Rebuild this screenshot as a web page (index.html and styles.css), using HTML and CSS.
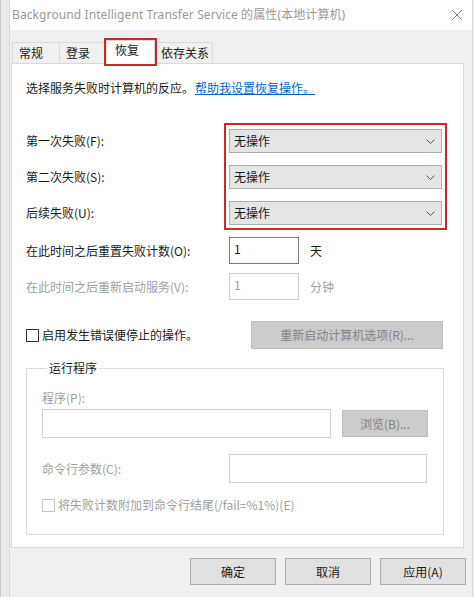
FILE: index.html
```html
<!DOCTYPE html>
<html>
<head>
    <title>Background Intelligent Transfer Service 的属性(本地计算机)</title>
    <link rel="stylesheet" href="styles.css">
</head>
<body>
    <div class="screen">
        <div class="behind"></div>
        <div class="window">
            <div class="titlebar">
                <span class="title">Background Intelligent Transfer Service 的属性(本地计算机)</span>
                <svg class="close" width="12" height="12" viewBox="0 0 12 12">
                    <path d="M1 1 L11 11 M11 1 L1 11" stroke="#7a7a7a" stroke-width="1" fill="none"/>
                </svg>
            </div>

            <div class="tabs">
                <div class="tab tab-w1">常规</div>
                <div class="tab tab-w1">登录</div>
                <div class="tab tab-active">恢复</div>
                <div class="tab tab-w2">依存关系</div>
            </div>

            <div class="page">
                <p class="intro">选择服务失败时计算机的反应。<a href="#">帮助我设置恢复操作。</a></p>

                <div class="fail-rows">
                    <div class="fail-labels">
                        <div class="fail-label">第一次失败(F):</div>
                        <div class="fail-label">第二次失败(S):</div>
                        <div class="fail-label">后续失败(U):</div>
                    </div>
                    <div class="fail-selects">
                        <div class="combo"><span>无操作</span><svg width="9" height="5" viewBox="0 0 9 5"><path d="M0.5 0.5 L4.5 4.5 L8.5 0.5" stroke="#555" fill="none"/></svg></div>
                        <div class="combo"><span>无操作</span><svg width="9" height="5" viewBox="0 0 9 5"><path d="M0.5 0.5 L4.5 4.5 L8.5 0.5" stroke="#555" fill="none"/></svg></div>
                        <div class="combo"><span>无操作</span><svg width="9" height="5" viewBox="0 0 9 5"><path d="M0.5 0.5 L4.5 4.5 L8.5 0.5" stroke="#555" fill="none"/></svg></div>
                    </div>
                </div>

                <div class="num-row first">
                    <span class="num-label">在此时间之后重置失败计数(O):</span>
                    <span class="num-box">1</span>
                    <span class="unit">天</span>
                </div>
                <div class="num-row disabled">
                    <span class="num-label">在此时间之后重新启动服务(V):</span>
                    <span class="num-box">1</span>
                    <span class="unit">分钟</span>
                </div>

                <div class="check-row">
                    <span class="check"></span>
                    <span class="check-text">启用发生错误便停止的操作。</span>
                    <span class="btn btn-disabled btn-restart">重新启动计算机选项(R)...</span>
                </div>

                <fieldset class="group">
                    <legend>运行程序</legend>
                    <div class="muted prog-label">程序(P):</div>
                    <div class="prog-row">
                        <span class="field field-prog"></span>
                        <span class="btn btn-disabled btn-browse">浏览(B)...</span>
                    </div>
                    <div class="args-row">
                        <span class="muted args-label">命令行参数(C):</span>
                        <span class="field field-args"></span>
                    </div>
                    <div class="append-row">
                        <span class="check check-disabled"></span>
                        <span class="muted">将失败计数附加到命令行结尾(/fail=%1%)(E)</span>
                    </div>
                </fieldset>
            </div>

            <div class="buttons">
                <span class="btn">确定</span>
                <span class="btn">取消</span>
                <span class="btn">应用(A)</span>
            </div>
        </div>
    </div>
</body>
</html>
```

FILE: styles.css
```css
* { box-sizing: border-box; }
body { margin: 0; font-family: "Noto Sans CJK SC", "Noto Sans", sans-serif; font-size: 12px; line-height: 16px; color: #1a1a1a; background: #f0f0f0; }
.screen { display: flex; width: 474px; height: 597px; overflow: hidden; }
.behind { width: 10px; background: #ebebeb; border-left: 1px solid #c9c9c9; border-right: 1px solid #d8d8d8; }
.window { width: 463px; background: #f0f0f0; border-right: 1px solid #dadada; }

.titlebar { height: 30px; background: #fff; display: flex; align-items: center; padding-left: 2px; }
.title { font-family: "Noto Sans", "Noto Sans CJK SC", sans-serif; font-size: 12px; color: #9a9a9a; letter-spacing: 0.1px; }
.close { margin-left: auto; margin-right: 9px; }

.tabs { display: flex; align-items: flex-end; margin-top: 12px; padding-left: 2px; height: 21px; position: relative; z-index: 1; }
.tab { height: 21px; padding: 2px 0 0 6px; background: #f0f0f0; border: 1px solid #d9d9d9; border-bottom: none; margin-right: -1px; }
.tab-w1 { width: 48px; }
.tab-w2 { width: 59px; padding-left: 6px; }
.tab-active { width: 49px; height: 24px; margin-bottom: -1px; background: #fff; padding: 1px 0 0 8px; position: relative; z-index: 2; outline: 2px solid #c9282d; outline-offset: 0; }

.page { margin-left: 1px; width: 453px; height: 485px; background: #fff; border: 1px solid #d9d9d9; padding: 16px 20px 0 14px; }
.intro { margin: 0; }
.intro a { color: #0066cc; margin-left: 1px; }

.fail-rows { display: flex; margin-top: 27px; }
.fail-labels { flex: none; width: 198px; padding-top: 6px; display: flex; flex-direction: column; gap: 12px; }
.fail-label { height: 24px; line-height: 24px; }
.fail-selects { flex: none; width: 223px; border: 2px solid #c9282d; padding: 4px 3px 3px 3px; display: flex; flex-direction: column; gap: 12px; }
.combo { height: 24px; background: #e5e5e5; border: 1px solid #adadad; display: flex; align-items: center; justify-content: space-between; padding: 0 6px 0 4px; }

.num-row { display: flex; align-items: center; margin-top: 9px; }
.num-row.first { margin-top: 7px; }
.num-label { width: 203px; }
.num-box { width: 70px; height: 27px; border: 1px solid #7a7a7a; padding: 3px 0 0 4px; }
.unit { margin-left: 11px; }
.disabled { color: #a0a0a0; }
.disabled .num-box { border-color: #cfcfcf; }

.check-row { display: flex; align-items: center; margin-top: 21px; }
.check { width: 13px; height: 13px; border: 1px solid #333; background: #fff; }
.check-text { margin-left: 3px; }
.check-disabled { border-color: #c4c4c4; }

.btn { display: flex; align-items: center; justify-content: center; width: 86px; height: 27px; background: #e1e1e1; border: 1px solid #adadad; }
.btn-disabled { background: #cccccc; border-color: #bfbfbf; color: #838383; }
.btn-restart { margin-left: auto; width: 192px; height: 28px; }
.btn-browse { width: 86px; height: 27px; }

.group { margin: 11px 0 0 0; width: 417px; height: 175px; border: 1px solid #dcdcdc; padding: 0 15px 0 15px; }
.group legend { padding: 0 2px; margin-left: 5px; line-height: 16px; }
.muted { color: #a0a0a0; }
.prog-label { margin-top: 14px; }
.prog-row { display: flex; align-items: center; margin-top: 3px; }
.field { display: block; height: 29px; border: 1px solid #d0d0d0; background: #fff; }
.field-prog { width: 289px; }
.btn-browse { margin-left: 11px; }
.args-row { display: flex; align-items: center; margin-top: 16px; }
.args-label { width: 187px; }
.field-args { width: 198px; }
.append-row { display: flex; align-items: center; gap: 3px; margin-top: 14px; }

.buttons { display: flex; justify-content: flex-end; gap: 9px; margin-top: 10px; padding-right: 6px; }
```
